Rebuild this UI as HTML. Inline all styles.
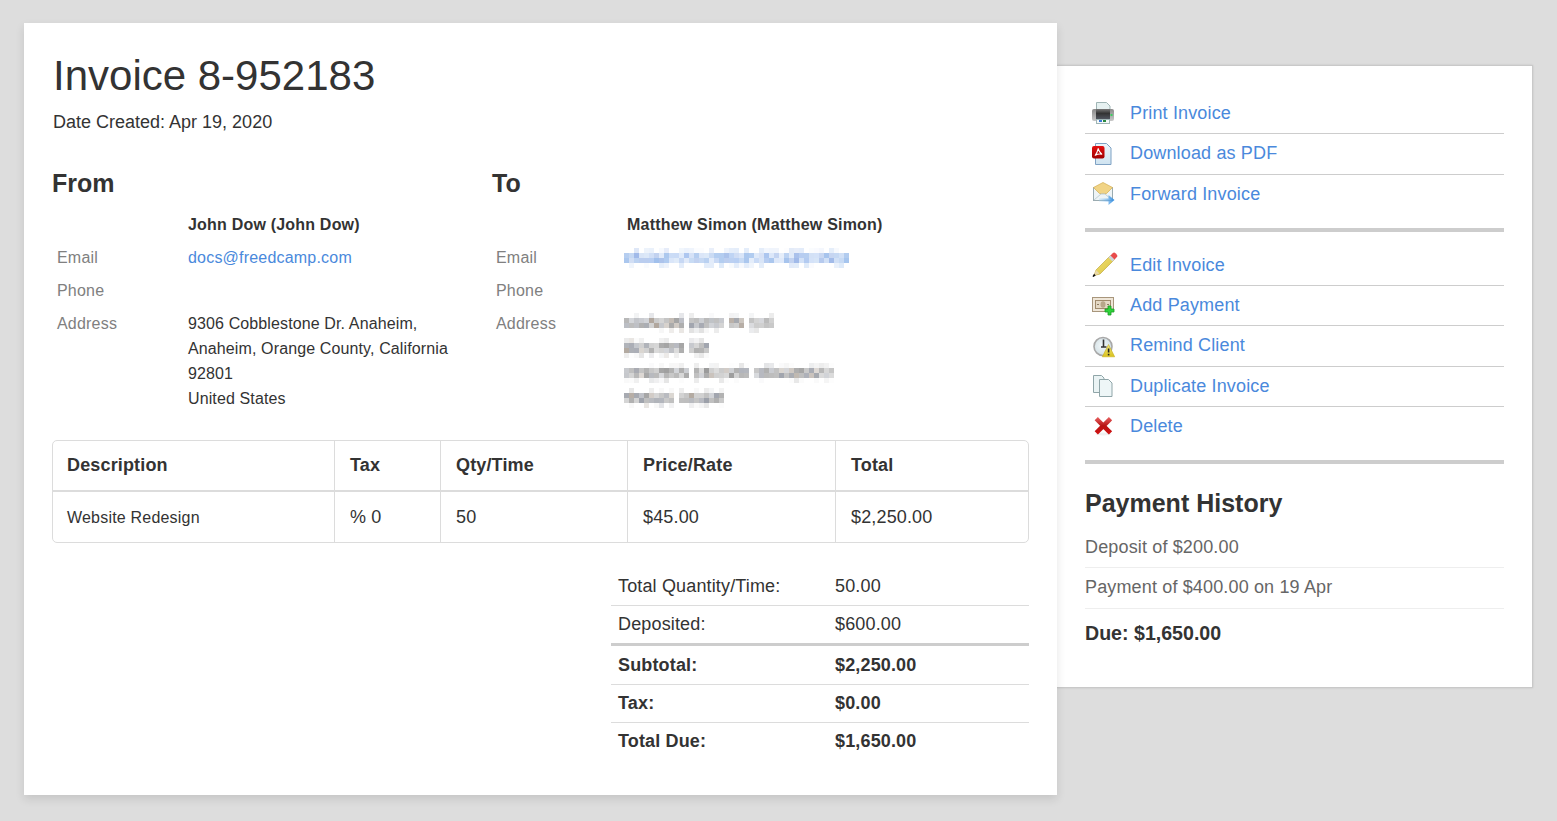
<!DOCTYPE html>
<html><head><meta charset="utf-8">
<style>
*{box-sizing:border-box;margin:0;padding:0}
html,body{width:1557px;height:821px;overflow:hidden;background:#dddddd;font-family:"Liberation Sans",sans-serif;color:#333}
.a{position:absolute;white-space:nowrap}
#side{position:absolute;left:1040px;top:65px;width:493px;height:623px;background:#fff;border:1px solid #c9c9c9;box-shadow:0 0 2px rgba(0,0,0,.12);z-index:1}
#main{position:absolute;left:24px;top:23px;width:1033px;height:772px;background:#fff;box-shadow:0 4px 9px rgba(0,0,0,.11);z-index:2}
#over{position:absolute;left:0;top:0;width:1557px;height:821px;z-index:3}
.b{font-weight:bold}
.s16{font-size:16px;line-height:20px;letter-spacing:.2px}
.s18{font-size:18px;line-height:22px;letter-spacing:.15px}
.lbl{color:#808080}
.lnk{color:#4a89dc}
.hl{position:absolute;height:1px;background:#ddd}
.sl{position:absolute;left:1085px;width:419px;height:1px;background:#cdcdcd}
.st{position:absolute;left:1085px;width:419px;height:4px;background:#cdcdcd}
.ic{position:absolute;left:1090px;width:26px;height:26px}
</style></head><body>
<div id="side"></div>
<div id="main"></div>
<div id="over">
  <div class="a" style="left:53px;top:55px;font-size:42px;line-height:42px">Invoice 8-952183</div>
  <div class="a s18" style="left:53px;top:111px;letter-spacing:0">Date Created: Apr 19, 2020</div>
  <div class="a b" style="left:52px;top:169px;font-size:25px;line-height:28px">From</div>
  <div class="a b" style="left:492px;top:169px;font-size:25px;line-height:28px">To</div>

  <div class="a b s16" style="left:188px;top:215px">John Dow (John Dow)</div>
  <div class="a b s16" style="left:627px;top:215px">Matthew Simon (Matthew Simon)</div>

  <div class="a s16 lbl" style="left:57px;top:248px">Email</div>
  <div class="a s16 lbl" style="left:57px;top:281px">Phone</div>
  <div class="a s16 lbl" style="left:57px;top:314px">Address</div>
  <div class="a s16 lbl" style="left:496px;top:248px">Email</div>
  <div class="a s16 lbl" style="left:496px;top:281px">Phone</div>
  <div class="a s16 lbl" style="left:496px;top:314px">Address</div>

  <div class="a s16 lnk" style="left:188px;top:248px">docs@freedcamp.com</div>
  <div class="a s16" style="left:188px;line-height:25px;top:311px;letter-spacing:.12px">9306 Cobblestone Dr. Anaheim,<br>Anaheim, Orange County, California<br>92801<br>United States</div>

  <!-- items table -->
  <div style="position:absolute;left:52px;top:440px;width:977px;height:103px;border:1px solid #dcdcdc;border-radius:5px"></div>
  <div style="position:absolute;left:53px;top:490px;width:975px;height:2px;background:#dcdcdc"></div>
  <div style="position:absolute;left:334px;top:441px;width:1px;height:101px;background:#dcdcdc"></div>
  <div style="position:absolute;left:440px;top:441px;width:1px;height:101px;background:#dcdcdc"></div>
  <div style="position:absolute;left:627px;top:441px;width:1px;height:101px;background:#dcdcdc"></div>
  <div style="position:absolute;left:835px;top:441px;width:1px;height:101px;background:#dcdcdc"></div>
  <div class="a b s18" style="left:67px;top:454px">Description</div>
  <div class="a b s18" style="left:350px;top:454px">Tax</div>
  <div class="a b s18" style="left:456px;top:454px">Qty/Time</div>
  <div class="a b s18" style="left:643px;top:454px">Price/Rate</div>
  <div class="a b s18" style="left:851px;top:454px">Total</div>
  <div class="a s16" style="left:67px;top:508px">Website Redesign</div>
  <div class="a s18" style="left:350px;top:506px">% 0</div>
  <div class="a s18" style="left:456px;top:506px">50</div>
  <div class="a s18" style="left:643px;top:506px">$45.00</div>
  <div class="a s18" style="left:851px;top:506px">$2,250.00</div>

  <!-- totals -->
  <div class="hl" style="left:611px;top:605px;width:418px;background:#dcdcdc"></div>
  <div style="position:absolute;left:611px;top:643px;width:418px;height:3px;background:#cdcdcd"></div>
  <div class="hl" style="left:611px;top:684px;width:418px;background:#dcdcdc"></div>
  <div class="hl" style="left:611px;top:722px;width:418px;background:#dcdcdc"></div>
  <div class="a s18" style="left:618px;top:575px">Total Quantity/Time:</div>
  <div class="a s18" style="left:835px;top:575px">50.00</div>
  <div class="a s18" style="left:618px;top:613px">Deposited:</div>
  <div class="a s18" style="left:835px;top:613px">$600.00</div>
  <div class="a s18 b" style="left:618px;top:654px">Subtotal:</div>
  <div class="a s18 b" style="left:835px;top:654px">$2,250.00</div>
  <div class="a s18 b" style="left:618px;top:692px">Tax:</div>
  <div class="a s18 b" style="left:835px;top:692px">$0.00</div>
  <div class="a s18 b" style="left:618px;top:730px">Total Due:</div>
  <div class="a s18 b" style="left:835px;top:730px">$1,650.00</div>

  <svg style="position:absolute;left:0;top:0" width="1557" height="821"><rect x="624" y="253" width="5" height="5" fill="#3f7fd8" fill-opacity="0.38"/><rect x="624" y="258" width="5" height="5" fill="#3f7fd8" fill-opacity="0.44"/><rect x="629" y="253" width="5" height="5" fill="#3f7fd8" fill-opacity="0.30"/><rect x="629" y="258" width="5" height="5" fill="#3a6fd0" fill-opacity="0.23"/><rect x="629" y="263" width="5" height="5" fill="#3f7fd8" fill-opacity="0.08"/><rect x="634" y="248" width="5" height="5" fill="#3a6fd0" fill-opacity="0.17"/><rect x="634" y="253" width="5" height="5" fill="#3a6fd0" fill-opacity="0.48"/><rect x="634" y="258" width="5" height="5" fill="#3f7fd8" fill-opacity="0.35"/><rect x="639" y="253" width="5" height="5" fill="#3f7fd8" fill-opacity="0.20"/><rect x="639" y="258" width="5" height="5" fill="#3a6fd0" fill-opacity="0.35"/><rect x="644" y="248" width="5" height="5" fill="#4a89dc" fill-opacity="0.10"/><rect x="644" y="253" width="5" height="5" fill="#3f7fd8" fill-opacity="0.18"/><rect x="644" y="258" width="5" height="5" fill="#3a6fd0" fill-opacity="0.35"/><rect x="644" y="263" width="5" height="5" fill="#6b9be6" fill-opacity="0.04"/><rect x="649" y="248" width="5" height="5" fill="#6b9be6" fill-opacity="0.14"/><rect x="649" y="253" width="5" height="5" fill="#5a8de0" fill-opacity="0.28"/><rect x="649" y="258" width="5" height="5" fill="#5a8de0" fill-opacity="0.43"/><rect x="654" y="253" width="5" height="5" fill="#3a6fd0" fill-opacity="0.31"/><rect x="654" y="258" width="5" height="5" fill="#3f7fd8" fill-opacity="0.49"/><rect x="659" y="248" width="5" height="5" fill="#6b9be6" fill-opacity="0.06"/><rect x="659" y="253" width="5" height="5" fill="#3f7fd8" fill-opacity="0.16"/><rect x="659" y="258" width="5" height="5" fill="#3a6fd0" fill-opacity="0.42"/><rect x="659" y="263" width="5" height="5" fill="#4a89dc" fill-opacity="0.14"/><rect x="664" y="248" width="5" height="5" fill="#3a6fd0" fill-opacity="0.13"/><rect x="664" y="253" width="5" height="5" fill="#3f7fd8" fill-opacity="0.43"/><rect x="664" y="258" width="5" height="5" fill="#4a89dc" fill-opacity="0.44"/><rect x="664" y="263" width="5" height="5" fill="#3f7fd8" fill-opacity="0.09"/><rect x="669" y="253" width="5" height="5" fill="#6b9be6" fill-opacity="0.35"/><rect x="669" y="258" width="5" height="5" fill="#6b9be6" fill-opacity="0.25"/><rect x="674" y="253" width="5" height="5" fill="#6b9be6" fill-opacity="0.36"/><rect x="674" y="258" width="5" height="5" fill="#4a89dc" fill-opacity="0.17"/><rect x="679" y="248" width="5" height="5" fill="#3f7fd8" fill-opacity="0.07"/><rect x="679" y="253" width="5" height="5" fill="#6b9be6" fill-opacity="0.21"/><rect x="679" y="258" width="5" height="5" fill="#5a8de0" fill-opacity="0.34"/><rect x="679" y="263" width="5" height="5" fill="#4a89dc" fill-opacity="0.15"/><rect x="684" y="248" width="5" height="5" fill="#6b9be6" fill-opacity="0.13"/><rect x="684" y="253" width="5" height="5" fill="#5a8de0" fill-opacity="0.49"/><rect x="684" y="258" width="5" height="5" fill="#5a8de0" fill-opacity="0.18"/><rect x="689" y="248" width="5" height="5" fill="#4a89dc" fill-opacity="0.09"/><rect x="689" y="253" width="5" height="5" fill="#5a8de0" fill-opacity="0.25"/><rect x="689" y="258" width="5" height="5" fill="#4a89dc" fill-opacity="0.30"/><rect x="694" y="248" width="5" height="5" fill="#3a6fd0" fill-opacity="0.02"/><rect x="694" y="253" width="5" height="5" fill="#3f7fd8" fill-opacity="0.38"/><rect x="694" y="258" width="5" height="5" fill="#3a6fd0" fill-opacity="0.31"/><rect x="699" y="248" width="5" height="5" fill="#3f7fd8" fill-opacity="0.02"/><rect x="699" y="253" width="5" height="5" fill="#5a8de0" fill-opacity="0.22"/><rect x="699" y="258" width="5" height="5" fill="#3f7fd8" fill-opacity="0.30"/><rect x="704" y="253" width="5" height="5" fill="#4a89dc" fill-opacity="0.19"/><rect x="704" y="258" width="5" height="5" fill="#3f7fd8" fill-opacity="0.36"/><rect x="704" y="263" width="5" height="5" fill="#5a8de0" fill-opacity="0.16"/><rect x="709" y="248" width="5" height="5" fill="#3a6fd0" fill-opacity="0.11"/><rect x="709" y="253" width="5" height="5" fill="#3f7fd8" fill-opacity="0.28"/><rect x="709" y="258" width="5" height="5" fill="#6b9be6" fill-opacity="0.19"/><rect x="709" y="263" width="5" height="5" fill="#6b9be6" fill-opacity="0.18"/><rect x="714" y="253" width="5" height="5" fill="#4a89dc" fill-opacity="0.41"/><rect x="714" y="258" width="5" height="5" fill="#5a8de0" fill-opacity="0.32"/><rect x="719" y="253" width="5" height="5" fill="#3f7fd8" fill-opacity="0.39"/><rect x="719" y="258" width="5" height="5" fill="#4a89dc" fill-opacity="0.42"/><rect x="719" y="263" width="5" height="5" fill="#4a89dc" fill-opacity="0.18"/><rect x="724" y="248" width="5" height="5" fill="#4a89dc" fill-opacity="0.09"/><rect x="724" y="253" width="5" height="5" fill="#3a6fd0" fill-opacity="0.42"/><rect x="724" y="258" width="5" height="5" fill="#3a6fd0" fill-opacity="0.34"/><rect x="729" y="248" width="5" height="5" fill="#5a8de0" fill-opacity="0.15"/><rect x="729" y="253" width="5" height="5" fill="#6b9be6" fill-opacity="0.43"/><rect x="729" y="258" width="5" height="5" fill="#5a8de0" fill-opacity="0.41"/><rect x="729" y="263" width="5" height="5" fill="#3f7fd8" fill-opacity="0.04"/><rect x="734" y="248" width="5" height="5" fill="#6b9be6" fill-opacity="0.18"/><rect x="734" y="253" width="5" height="5" fill="#3a6fd0" fill-opacity="0.24"/><rect x="734" y="258" width="5" height="5" fill="#6b9be6" fill-opacity="0.48"/><rect x="734" y="263" width="5" height="5" fill="#4a89dc" fill-opacity="0.15"/><rect x="739" y="253" width="5" height="5" fill="#5a8de0" fill-opacity="0.23"/><rect x="739" y="258" width="5" height="5" fill="#4a89dc" fill-opacity="0.31"/><rect x="739" y="263" width="5" height="5" fill="#3a6fd0" fill-opacity="0.04"/><rect x="744" y="248" width="5" height="5" fill="#4a89dc" fill-opacity="0.15"/><rect x="744" y="253" width="5" height="5" fill="#3f7fd8" fill-opacity="0.43"/><rect x="744" y="258" width="5" height="5" fill="#3f7fd8" fill-opacity="0.44"/><rect x="744" y="263" width="5" height="5" fill="#5a8de0" fill-opacity="0.16"/><rect x="749" y="253" width="5" height="5" fill="#4a89dc" fill-opacity="0.43"/><rect x="749" y="258" width="5" height="5" fill="#6b9be6" fill-opacity="0.18"/><rect x="749" y="263" width="5" height="5" fill="#3f7fd8" fill-opacity="0.08"/><rect x="754" y="253" width="5" height="5" fill="#5a8de0" fill-opacity="0.19"/><rect x="754" y="258" width="5" height="5" fill="#6b9be6" fill-opacity="0.36"/><rect x="759" y="248" width="5" height="5" fill="#4a89dc" fill-opacity="0.15"/><rect x="759" y="253" width="5" height="5" fill="#3a6fd0" fill-opacity="0.20"/><rect x="759" y="258" width="5" height="5" fill="#3f7fd8" fill-opacity="0.20"/><rect x="759" y="263" width="5" height="5" fill="#3f7fd8" fill-opacity="0.14"/><rect x="764" y="248" width="5" height="5" fill="#6b9be6" fill-opacity="0.09"/><rect x="764" y="253" width="5" height="5" fill="#5a8de0" fill-opacity="0.50"/><rect x="764" y="258" width="5" height="5" fill="#5a8de0" fill-opacity="0.44"/><rect x="769" y="248" width="5" height="5" fill="#4a89dc" fill-opacity="0.09"/><rect x="769" y="253" width="5" height="5" fill="#6b9be6" fill-opacity="0.24"/><rect x="769" y="258" width="5" height="5" fill="#3f7fd8" fill-opacity="0.44"/><rect x="774" y="248" width="5" height="5" fill="#3a6fd0" fill-opacity="0.08"/><rect x="774" y="253" width="5" height="5" fill="#3a6fd0" fill-opacity="0.30"/><rect x="774" y="258" width="5" height="5" fill="#5a8de0" fill-opacity="0.20"/><rect x="779" y="253" width="5" height="5" fill="#5a8de0" fill-opacity="0.15"/><rect x="779" y="258" width="5" height="5" fill="#6b9be6" fill-opacity="0.21"/><rect x="784" y="248" width="5" height="5" fill="#3a6fd0" fill-opacity="0.01"/><rect x="784" y="253" width="5" height="5" fill="#3f7fd8" fill-opacity="0.34"/><rect x="784" y="258" width="5" height="5" fill="#3f7fd8" fill-opacity="0.46"/><rect x="789" y="248" width="5" height="5" fill="#3a6fd0" fill-opacity="0.14"/><rect x="789" y="253" width="5" height="5" fill="#3f7fd8" fill-opacity="0.16"/><rect x="789" y="258" width="5" height="5" fill="#3a6fd0" fill-opacity="0.31"/><rect x="789" y="263" width="5" height="5" fill="#5a8de0" fill-opacity="0.18"/><rect x="794" y="248" width="5" height="5" fill="#3a6fd0" fill-opacity="0.12"/><rect x="794" y="253" width="5" height="5" fill="#3a6fd0" fill-opacity="0.43"/><rect x="794" y="258" width="5" height="5" fill="#3a6fd0" fill-opacity="0.48"/><rect x="794" y="263" width="5" height="5" fill="#4a89dc" fill-opacity="0.16"/><rect x="799" y="248" width="5" height="5" fill="#5a8de0" fill-opacity="0.17"/><rect x="799" y="253" width="5" height="5" fill="#5a8de0" fill-opacity="0.44"/><rect x="799" y="258" width="5" height="5" fill="#6b9be6" fill-opacity="0.30"/><rect x="804" y="253" width="5" height="5" fill="#3f7fd8" fill-opacity="0.38"/><rect x="804" y="258" width="5" height="5" fill="#5a8de0" fill-opacity="0.46"/><rect x="804" y="263" width="5" height="5" fill="#4a89dc" fill-opacity="0.17"/><rect x="809" y="248" width="5" height="5" fill="#6b9be6" fill-opacity="0.03"/><rect x="809" y="253" width="5" height="5" fill="#3f7fd8" fill-opacity="0.23"/><rect x="809" y="258" width="5" height="5" fill="#6b9be6" fill-opacity="0.29"/><rect x="809" y="263" width="5" height="5" fill="#5a8de0" fill-opacity="0.03"/><rect x="814" y="248" width="5" height="5" fill="#3a6fd0" fill-opacity="0.03"/><rect x="814" y="253" width="5" height="5" fill="#6b9be6" fill-opacity="0.29"/><rect x="814" y="258" width="5" height="5" fill="#4a89dc" fill-opacity="0.22"/><rect x="819" y="248" width="5" height="5" fill="#3f7fd8" fill-opacity="0.06"/><rect x="819" y="253" width="5" height="5" fill="#3a6fd0" fill-opacity="0.28"/><rect x="819" y="258" width="5" height="5" fill="#3a6fd0" fill-opacity="0.37"/><rect x="824" y="253" width="5" height="5" fill="#3f7fd8" fill-opacity="0.46"/><rect x="824" y="258" width="5" height="5" fill="#3f7fd8" fill-opacity="0.24"/><rect x="829" y="248" width="5" height="5" fill="#4a89dc" fill-opacity="0.14"/><rect x="829" y="253" width="5" height="5" fill="#3a6fd0" fill-opacity="0.29"/><rect x="829" y="258" width="5" height="5" fill="#3a6fd0" fill-opacity="0.47"/><rect x="834" y="248" width="5" height="5" fill="#5a8de0" fill-opacity="0.05"/><rect x="834" y="253" width="5" height="5" fill="#3f7fd8" fill-opacity="0.30"/><rect x="834" y="258" width="5" height="5" fill="#3f7fd8" fill-opacity="0.24"/><rect x="834" y="263" width="5" height="5" fill="#3f7fd8" fill-opacity="0.11"/><rect x="839" y="253" width="5" height="5" fill="#3f7fd8" fill-opacity="0.24"/><rect x="839" y="258" width="5" height="5" fill="#4a89dc" fill-opacity="0.31"/><rect x="839" y="263" width="5" height="5" fill="#4a89dc" fill-opacity="0.18"/><rect x="844" y="253" width="5" height="5" fill="#3f7fd8" fill-opacity="0.40"/><rect x="844" y="258" width="5" height="5" fill="#4a89dc" fill-opacity="0.49"/><rect x="624" y="318" width="5" height="5" fill="#777" fill-opacity="0.52"/><rect x="624" y="323" width="5" height="5" fill="#5a6070" fill-opacity="0.41"/><rect x="629" y="318" width="5" height="5" fill="#5a6070" fill-opacity="0.26"/><rect x="629" y="323" width="5" height="5" fill="#666" fill-opacity="0.43"/><rect x="634" y="313" width="5" height="5" fill="#5a6070" fill-opacity="0.08"/><rect x="634" y="318" width="5" height="5" fill="#6a6f7a" fill-opacity="0.40"/><rect x="634" y="323" width="5" height="5" fill="#6a6f7a" fill-opacity="0.44"/><rect x="639" y="318" width="5" height="5" fill="#5a6070" fill-opacity="0.32"/><rect x="639" y="323" width="5" height="5" fill="#666" fill-opacity="0.51"/><rect x="644" y="318" width="5" height="5" fill="#5a6070" fill-opacity="0.27"/><rect x="644" y="323" width="5" height="5" fill="#6a6f7a" fill-opacity="0.56"/><rect x="649" y="313" width="5" height="5" fill="#5a6070" fill-opacity="0.15"/><rect x="649" y="318" width="5" height="5" fill="#7a6a5a" fill-opacity="0.59"/><rect x="649" y="323" width="5" height="5" fill="#777" fill-opacity="0.33"/><rect x="654" y="318" width="5" height="5" fill="#777" fill-opacity="0.38"/><rect x="654" y="323" width="5" height="5" fill="#7a6a5a" fill-opacity="0.59"/><rect x="659" y="318" width="5" height="5" fill="#777" fill-opacity="0.31"/><rect x="659" y="323" width="5" height="5" fill="#6a6f7a" fill-opacity="0.38"/><rect x="659" y="328" width="5" height="5" fill="#666" fill-opacity="0.05"/><rect x="664" y="318" width="5" height="5" fill="#555" fill-opacity="0.34"/><rect x="664" y="323" width="5" height="5" fill="#7a6a5a" fill-opacity="0.30"/><rect x="669" y="318" width="5" height="5" fill="#7a6a5a" fill-opacity="0.45"/><rect x="669" y="323" width="5" height="5" fill="#666" fill-opacity="0.55"/><rect x="669" y="328" width="5" height="5" fill="#7a6a5a" fill-opacity="0.12"/><rect x="674" y="318" width="5" height="5" fill="#666" fill-opacity="0.59"/><rect x="674" y="323" width="5" height="5" fill="#7a6a5a" fill-opacity="0.35"/><rect x="679" y="313" width="5" height="5" fill="#5a6070" fill-opacity="0.15"/><rect x="679" y="318" width="5" height="5" fill="#5a6070" fill-opacity="0.40"/><rect x="679" y="323" width="5" height="5" fill="#666" fill-opacity="0.53"/><rect x="679" y="328" width="5" height="5" fill="#7a6a5a" fill-opacity="0.16"/><rect x="689" y="313" width="5" height="5" fill="#888" fill-opacity="0.15"/><rect x="689" y="318" width="5" height="5" fill="#888" fill-opacity="0.49"/><rect x="689" y="323" width="5" height="5" fill="#5a6070" fill-opacity="0.56"/><rect x="689" y="328" width="5" height="5" fill="#555" fill-opacity="0.17"/><rect x="694" y="318" width="5" height="5" fill="#555" fill-opacity="0.38"/><rect x="694" y="323" width="5" height="5" fill="#6a6f7a" fill-opacity="0.38"/><rect x="694" y="328" width="5" height="5" fill="#5a6070" fill-opacity="0.10"/><rect x="699" y="318" width="5" height="5" fill="#6a6f7a" fill-opacity="0.34"/><rect x="699" y="323" width="5" height="5" fill="#5a6070" fill-opacity="0.53"/><rect x="699" y="328" width="5" height="5" fill="#555" fill-opacity="0.17"/><rect x="704" y="318" width="5" height="5" fill="#777" fill-opacity="0.51"/><rect x="704" y="323" width="5" height="5" fill="#888" fill-opacity="0.53"/><rect x="704" y="328" width="5" height="5" fill="#666" fill-opacity="0.05"/><rect x="709" y="313" width="5" height="5" fill="#6a6f7a" fill-opacity="0.04"/><rect x="709" y="318" width="5" height="5" fill="#6a6f7a" fill-opacity="0.42"/><rect x="709" y="323" width="5" height="5" fill="#5a6070" fill-opacity="0.28"/><rect x="714" y="318" width="5" height="5" fill="#777" fill-opacity="0.46"/><rect x="714" y="323" width="5" height="5" fill="#5a6070" fill-opacity="0.34"/><rect x="714" y="328" width="5" height="5" fill="#666" fill-opacity="0.12"/><rect x="719" y="318" width="5" height="5" fill="#5a6070" fill-opacity="0.34"/><rect x="719" y="323" width="5" height="5" fill="#666" fill-opacity="0.28"/><rect x="729" y="313" width="5" height="5" fill="#6a6f7a" fill-opacity="0.09"/><rect x="729" y="318" width="5" height="5" fill="#7a6a5a" fill-opacity="0.52"/><rect x="729" y="323" width="5" height="5" fill="#555" fill-opacity="0.32"/><rect x="734" y="313" width="5" height="5" fill="#6a6f7a" fill-opacity="0.08"/><rect x="734" y="318" width="5" height="5" fill="#6a6f7a" fill-opacity="0.60"/><rect x="734" y="323" width="5" height="5" fill="#666" fill-opacity="0.32"/><rect x="739" y="318" width="5" height="5" fill="#7a6a5a" fill-opacity="0.38"/><rect x="739" y="323" width="5" height="5" fill="#7a6a5a" fill-opacity="0.54"/><rect x="749" y="313" width="5" height="5" fill="#6a6f7a" fill-opacity="0.07"/><rect x="749" y="318" width="5" height="5" fill="#666" fill-opacity="0.39"/><rect x="749" y="323" width="5" height="5" fill="#6a6f7a" fill-opacity="0.25"/><rect x="749" y="328" width="5" height="5" fill="#5a6070" fill-opacity="0.12"/><rect x="754" y="318" width="5" height="5" fill="#888" fill-opacity="0.36"/><rect x="754" y="323" width="5" height="5" fill="#777" fill-opacity="0.37"/><rect x="754" y="328" width="5" height="5" fill="#555" fill-opacity="0.14"/><rect x="759" y="318" width="5" height="5" fill="#5a6070" fill-opacity="0.25"/><rect x="759" y="323" width="5" height="5" fill="#777" fill-opacity="0.35"/><rect x="764" y="318" width="5" height="5" fill="#888" fill-opacity="0.57"/><rect x="764" y="323" width="5" height="5" fill="#555" fill-opacity="0.35"/><rect x="769" y="313" width="5" height="5" fill="#666" fill-opacity="0.12"/><rect x="769" y="318" width="5" height="5" fill="#777" fill-opacity="0.34"/><rect x="769" y="323" width="5" height="5" fill="#777" fill-opacity="0.40"/><rect x="624" y="338" width="5" height="5" fill="#888" fill-opacity="0.17"/><rect x="624" y="343" width="5" height="5" fill="#6a6f7a" fill-opacity="0.52"/><rect x="624" y="348" width="5" height="5" fill="#7a6a5a" fill-opacity="0.57"/><rect x="624" y="353" width="5" height="5" fill="#555" fill-opacity="0.10"/><rect x="629" y="338" width="5" height="5" fill="#7a6a5a" fill-opacity="0.17"/><rect x="629" y="343" width="5" height="5" fill="#5a6070" fill-opacity="0.51"/><rect x="629" y="348" width="5" height="5" fill="#6a6f7a" fill-opacity="0.55"/><rect x="629" y="353" width="5" height="5" fill="#666" fill-opacity="0.01"/><rect x="634" y="338" width="5" height="5" fill="#777" fill-opacity="0.03"/><rect x="634" y="343" width="5" height="5" fill="#5a6070" fill-opacity="0.35"/><rect x="634" y="348" width="5" height="5" fill="#5a6070" fill-opacity="0.51"/><rect x="634" y="353" width="5" height="5" fill="#777" fill-opacity="0.05"/><rect x="639" y="338" width="5" height="5" fill="#555" fill-opacity="0.09"/><rect x="639" y="343" width="5" height="5" fill="#666" fill-opacity="0.31"/><rect x="639" y="348" width="5" height="5" fill="#7a6a5a" fill-opacity="0.28"/><rect x="639" y="353" width="5" height="5" fill="#666" fill-opacity="0.16"/><rect x="644" y="343" width="5" height="5" fill="#6a6f7a" fill-opacity="0.52"/><rect x="644" y="348" width="5" height="5" fill="#666" fill-opacity="0.30"/><rect x="649" y="343" width="5" height="5" fill="#888" fill-opacity="0.38"/><rect x="649" y="348" width="5" height="5" fill="#555" fill-opacity="0.45"/><rect x="649" y="353" width="5" height="5" fill="#6a6f7a" fill-opacity="0.13"/><rect x="654" y="343" width="5" height="5" fill="#888" fill-opacity="0.34"/><rect x="654" y="348" width="5" height="5" fill="#777" fill-opacity="0.27"/><rect x="659" y="338" width="5" height="5" fill="#888" fill-opacity="0.12"/><rect x="659" y="343" width="5" height="5" fill="#666" fill-opacity="0.55"/><rect x="659" y="348" width="5" height="5" fill="#666" fill-opacity="0.28"/><rect x="659" y="353" width="5" height="5" fill="#6a6f7a" fill-opacity="0.07"/><rect x="664" y="338" width="5" height="5" fill="#888" fill-opacity="0.17"/><rect x="664" y="343" width="5" height="5" fill="#666" fill-opacity="0.59"/><rect x="664" y="348" width="5" height="5" fill="#5a6070" fill-opacity="0.26"/><rect x="664" y="353" width="5" height="5" fill="#7a6a5a" fill-opacity="0.14"/><rect x="669" y="343" width="5" height="5" fill="#888" fill-opacity="0.58"/><rect x="669" y="348" width="5" height="5" fill="#6a6f7a" fill-opacity="0.43"/><rect x="674" y="343" width="5" height="5" fill="#5a6070" fill-opacity="0.43"/><rect x="674" y="348" width="5" height="5" fill="#888" fill-opacity="0.29"/><rect x="674" y="353" width="5" height="5" fill="#888" fill-opacity="0.13"/><rect x="679" y="343" width="5" height="5" fill="#555" fill-opacity="0.52"/><rect x="679" y="348" width="5" height="5" fill="#666" fill-opacity="0.52"/><rect x="689" y="338" width="5" height="5" fill="#5a6070" fill-opacity="0.13"/><rect x="689" y="343" width="5" height="5" fill="#5a6070" fill-opacity="0.34"/><rect x="689" y="348" width="5" height="5" fill="#888" fill-opacity="0.40"/><rect x="694" y="338" width="5" height="5" fill="#6a6f7a" fill-opacity="0.09"/><rect x="694" y="343" width="5" height="5" fill="#888" fill-opacity="0.34"/><rect x="694" y="348" width="5" height="5" fill="#555" fill-opacity="0.46"/><rect x="694" y="353" width="5" height="5" fill="#777" fill-opacity="0.10"/><rect x="699" y="338" width="5" height="5" fill="#666" fill-opacity="0.17"/><rect x="699" y="343" width="5" height="5" fill="#666" fill-opacity="0.42"/><rect x="699" y="348" width="5" height="5" fill="#555" fill-opacity="0.44"/><rect x="699" y="353" width="5" height="5" fill="#777" fill-opacity="0.17"/><rect x="704" y="343" width="5" height="5" fill="#5a6070" fill-opacity="0.56"/><rect x="704" y="348" width="5" height="5" fill="#777" fill-opacity="0.40"/><rect x="704" y="353" width="5" height="5" fill="#777" fill-opacity="0.04"/><rect x="624" y="368" width="5" height="5" fill="#6a6f7a" fill-opacity="0.37"/><rect x="624" y="373" width="5" height="5" fill="#6a6f7a" fill-opacity="0.38"/><rect x="624" y="378" width="5" height="5" fill="#5a6070" fill-opacity="0.04"/><rect x="629" y="368" width="5" height="5" fill="#666" fill-opacity="0.42"/><rect x="629" y="373" width="5" height="5" fill="#888" fill-opacity="0.36"/><rect x="629" y="378" width="5" height="5" fill="#777" fill-opacity="0.03"/><rect x="634" y="368" width="5" height="5" fill="#6a6f7a" fill-opacity="0.58"/><rect x="634" y="373" width="5" height="5" fill="#666" fill-opacity="0.46"/><rect x="634" y="378" width="5" height="5" fill="#555" fill-opacity="0.09"/><rect x="639" y="368" width="5" height="5" fill="#666" fill-opacity="0.39"/><rect x="639" y="373" width="5" height="5" fill="#7a6a5a" fill-opacity="0.26"/><rect x="644" y="368" width="5" height="5" fill="#777" fill-opacity="0.56"/><rect x="644" y="373" width="5" height="5" fill="#555" fill-opacity="0.51"/><rect x="649" y="363" width="5" height="5" fill="#5a6070" fill-opacity="0.03"/><rect x="649" y="368" width="5" height="5" fill="#777" fill-opacity="0.41"/><rect x="649" y="373" width="5" height="5" fill="#6a6f7a" fill-opacity="0.48"/><rect x="649" y="378" width="5" height="5" fill="#6a6f7a" fill-opacity="0.15"/><rect x="654" y="368" width="5" height="5" fill="#777" fill-opacity="0.35"/><rect x="654" y="373" width="5" height="5" fill="#555" fill-opacity="0.40"/><rect x="654" y="378" width="5" height="5" fill="#6a6f7a" fill-opacity="0.10"/><rect x="659" y="363" width="5" height="5" fill="#888" fill-opacity="0.06"/><rect x="659" y="368" width="5" height="5" fill="#555" fill-opacity="0.53"/><rect x="659" y="373" width="5" height="5" fill="#6a6f7a" fill-opacity="0.27"/><rect x="659" y="378" width="5" height="5" fill="#6a6f7a" fill-opacity="0.04"/><rect x="664" y="368" width="5" height="5" fill="#555" fill-opacity="0.56"/><rect x="664" y="373" width="5" height="5" fill="#666" fill-opacity="0.47"/><rect x="664" y="378" width="5" height="5" fill="#555" fill-opacity="0.15"/><rect x="669" y="363" width="5" height="5" fill="#888" fill-opacity="0.07"/><rect x="669" y="368" width="5" height="5" fill="#777" fill-opacity="0.57"/><rect x="669" y="373" width="5" height="5" fill="#555" fill-opacity="0.32"/><rect x="674" y="363" width="5" height="5" fill="#7a6a5a" fill-opacity="0.05"/><rect x="674" y="368" width="5" height="5" fill="#5a6070" fill-opacity="0.27"/><rect x="674" y="373" width="5" height="5" fill="#777" fill-opacity="0.50"/><rect x="679" y="363" width="5" height="5" fill="#888" fill-opacity="0.13"/><rect x="679" y="368" width="5" height="5" fill="#555" fill-opacity="0.47"/><rect x="679" y="373" width="5" height="5" fill="#666" fill-opacity="0.26"/><rect x="679" y="378" width="5" height="5" fill="#6a6f7a" fill-opacity="0.02"/><rect x="684" y="368" width="5" height="5" fill="#6a6f7a" fill-opacity="0.34"/><rect x="684" y="373" width="5" height="5" fill="#666" fill-opacity="0.54"/><rect x="694" y="363" width="5" height="5" fill="#888" fill-opacity="0.14"/><rect x="694" y="368" width="5" height="5" fill="#666" fill-opacity="0.49"/><rect x="694" y="373" width="5" height="5" fill="#777" fill-opacity="0.46"/><rect x="694" y="378" width="5" height="5" fill="#888" fill-opacity="0.16"/><rect x="699" y="368" width="5" height="5" fill="#888" fill-opacity="0.32"/><rect x="699" y="373" width="5" height="5" fill="#6a6f7a" fill-opacity="0.31"/><rect x="704" y="368" width="5" height="5" fill="#555" fill-opacity="0.59"/><rect x="704" y="373" width="5" height="5" fill="#777" fill-opacity="0.60"/><rect x="709" y="363" width="5" height="5" fill="#6a6f7a" fill-opacity="0.08"/><rect x="709" y="368" width="5" height="5" fill="#666" fill-opacity="0.31"/><rect x="709" y="373" width="5" height="5" fill="#7a6a5a" fill-opacity="0.40"/><rect x="714" y="363" width="5" height="5" fill="#888" fill-opacity="0.10"/><rect x="714" y="368" width="5" height="5" fill="#888" fill-opacity="0.29"/><rect x="714" y="373" width="5" height="5" fill="#777" fill-opacity="0.35"/><rect x="719" y="368" width="5" height="5" fill="#666" fill-opacity="0.34"/><rect x="719" y="373" width="5" height="5" fill="#777" fill-opacity="0.33"/><rect x="719" y="378" width="5" height="5" fill="#777" fill-opacity="0.16"/><rect x="724" y="368" width="5" height="5" fill="#7a6a5a" fill-opacity="0.34"/><rect x="724" y="373" width="5" height="5" fill="#888" fill-opacity="0.33"/><rect x="724" y="378" width="5" height="5" fill="#555" fill-opacity="0.02"/><rect x="729" y="363" width="5" height="5" fill="#888" fill-opacity="0.02"/><rect x="729" y="368" width="5" height="5" fill="#6a6f7a" fill-opacity="0.33"/><rect x="729" y="373" width="5" height="5" fill="#555" fill-opacity="0.57"/><rect x="734" y="363" width="5" height="5" fill="#888" fill-opacity="0.01"/><rect x="734" y="368" width="5" height="5" fill="#555" fill-opacity="0.45"/><rect x="734" y="373" width="5" height="5" fill="#888" fill-opacity="0.38"/><rect x="734" y="378" width="5" height="5" fill="#888" fill-opacity="0.03"/><rect x="739" y="363" width="5" height="5" fill="#555" fill-opacity="0.14"/><rect x="739" y="368" width="5" height="5" fill="#5a6070" fill-opacity="0.47"/><rect x="739" y="373" width="5" height="5" fill="#666" fill-opacity="0.47"/><rect x="744" y="363" width="5" height="5" fill="#555" fill-opacity="0.01"/><rect x="744" y="368" width="5" height="5" fill="#5a6070" fill-opacity="0.46"/><rect x="744" y="373" width="5" height="5" fill="#888" fill-opacity="0.57"/><rect x="754" y="368" width="5" height="5" fill="#666" fill-opacity="0.36"/><rect x="754" y="373" width="5" height="5" fill="#6a6f7a" fill-opacity="0.26"/><rect x="759" y="368" width="5" height="5" fill="#5a6070" fill-opacity="0.44"/><rect x="759" y="373" width="5" height="5" fill="#5a6070" fill-opacity="0.44"/><rect x="759" y="378" width="5" height="5" fill="#6a6f7a" fill-opacity="0.03"/><rect x="764" y="363" width="5" height="5" fill="#6a6f7a" fill-opacity="0.18"/><rect x="764" y="368" width="5" height="5" fill="#777" fill-opacity="0.58"/><rect x="764" y="373" width="5" height="5" fill="#777" fill-opacity="0.51"/><rect x="769" y="363" width="5" height="5" fill="#5a6070" fill-opacity="0.14"/><rect x="769" y="368" width="5" height="5" fill="#5a6070" fill-opacity="0.32"/><rect x="769" y="373" width="5" height="5" fill="#555" fill-opacity="0.39"/><rect x="774" y="368" width="5" height="5" fill="#777" fill-opacity="0.45"/><rect x="774" y="373" width="5" height="5" fill="#666" fill-opacity="0.41"/><rect x="779" y="363" width="5" height="5" fill="#6a6f7a" fill-opacity="0.03"/><rect x="779" y="368" width="5" height="5" fill="#7a6a5a" fill-opacity="0.28"/><rect x="779" y="373" width="5" height="5" fill="#5a6070" fill-opacity="0.57"/><rect x="784" y="363" width="5" height="5" fill="#555" fill-opacity="0.05"/><rect x="784" y="368" width="5" height="5" fill="#6a6f7a" fill-opacity="0.29"/><rect x="784" y="373" width="5" height="5" fill="#888" fill-opacity="0.51"/><rect x="789" y="363" width="5" height="5" fill="#6a6f7a" fill-opacity="0.02"/><rect x="789" y="368" width="5" height="5" fill="#7a6a5a" fill-opacity="0.36"/><rect x="789" y="373" width="5" height="5" fill="#6a6f7a" fill-opacity="0.57"/><rect x="789" y="378" width="5" height="5" fill="#5a6070" fill-opacity="0.02"/><rect x="794" y="368" width="5" height="5" fill="#666" fill-opacity="0.53"/><rect x="794" y="373" width="5" height="5" fill="#7a6a5a" fill-opacity="0.47"/><rect x="794" y="378" width="5" height="5" fill="#666" fill-opacity="0.15"/><rect x="799" y="368" width="5" height="5" fill="#666" fill-opacity="0.58"/><rect x="799" y="373" width="5" height="5" fill="#555" fill-opacity="0.38"/><rect x="799" y="378" width="5" height="5" fill="#888" fill-opacity="0.03"/><rect x="804" y="368" width="5" height="5" fill="#888" fill-opacity="0.45"/><rect x="804" y="373" width="5" height="5" fill="#5a6070" fill-opacity="0.49"/><rect x="809" y="363" width="5" height="5" fill="#5a6070" fill-opacity="0.11"/><rect x="809" y="368" width="5" height="5" fill="#5a6070" fill-opacity="0.52"/><rect x="809" y="373" width="5" height="5" fill="#7a6a5a" fill-opacity="0.40"/><rect x="814" y="363" width="5" height="5" fill="#666" fill-opacity="0.07"/><rect x="814" y="368" width="5" height="5" fill="#7a6a5a" fill-opacity="0.26"/><rect x="814" y="373" width="5" height="5" fill="#6a6f7a" fill-opacity="0.60"/><rect x="814" y="378" width="5" height="5" fill="#888" fill-opacity="0.04"/><rect x="819" y="363" width="5" height="5" fill="#888" fill-opacity="0.15"/><rect x="819" y="368" width="5" height="5" fill="#555" fill-opacity="0.42"/><rect x="819" y="373" width="5" height="5" fill="#777" fill-opacity="0.27"/><rect x="824" y="363" width="5" height="5" fill="#555" fill-opacity="0.08"/><rect x="824" y="368" width="5" height="5" fill="#666" fill-opacity="0.26"/><rect x="824" y="373" width="5" height="5" fill="#5a6070" fill-opacity="0.28"/><rect x="824" y="378" width="5" height="5" fill="#555" fill-opacity="0.06"/><rect x="829" y="363" width="5" height="5" fill="#6a6f7a" fill-opacity="0.01"/><rect x="829" y="368" width="5" height="5" fill="#888" fill-opacity="0.48"/><rect x="829" y="373" width="5" height="5" fill="#888" fill-opacity="0.30"/><rect x="829" y="378" width="5" height="5" fill="#5a6070" fill-opacity="0.01"/><rect x="624" y="393" width="5" height="5" fill="#6a6f7a" fill-opacity="0.59"/><rect x="624" y="398" width="5" height="5" fill="#888" fill-opacity="0.35"/><rect x="629" y="388" width="5" height="5" fill="#555" fill-opacity="0.14"/><rect x="629" y="393" width="5" height="5" fill="#7a6a5a" fill-opacity="0.54"/><rect x="629" y="398" width="5" height="5" fill="#666" fill-opacity="0.51"/><rect x="629" y="403" width="5" height="5" fill="#888" fill-opacity="0.06"/><rect x="634" y="393" width="5" height="5" fill="#6a6f7a" fill-opacity="0.59"/><rect x="634" y="398" width="5" height="5" fill="#777" fill-opacity="0.32"/><rect x="639" y="393" width="5" height="5" fill="#5a6070" fill-opacity="0.39"/><rect x="639" y="398" width="5" height="5" fill="#5a6070" fill-opacity="0.58"/><rect x="644" y="393" width="5" height="5" fill="#555" fill-opacity="0.52"/><rect x="644" y="398" width="5" height="5" fill="#777" fill-opacity="0.47"/><rect x="644" y="403" width="5" height="5" fill="#7a6a5a" fill-opacity="0.17"/><rect x="649" y="388" width="5" height="5" fill="#555" fill-opacity="0.10"/><rect x="649" y="393" width="5" height="5" fill="#7a6a5a" fill-opacity="0.34"/><rect x="649" y="398" width="5" height="5" fill="#6a6f7a" fill-opacity="0.47"/><rect x="654" y="393" width="5" height="5" fill="#777" fill-opacity="0.30"/><rect x="654" y="398" width="5" height="5" fill="#6a6f7a" fill-opacity="0.52"/><rect x="654" y="403" width="5" height="5" fill="#555" fill-opacity="0.04"/><rect x="659" y="388" width="5" height="5" fill="#777" fill-opacity="0.05"/><rect x="659" y="393" width="5" height="5" fill="#888" fill-opacity="0.47"/><rect x="659" y="398" width="5" height="5" fill="#5a6070" fill-opacity="0.46"/><rect x="659" y="403" width="5" height="5" fill="#5a6070" fill-opacity="0.16"/><rect x="664" y="393" width="5" height="5" fill="#6a6f7a" fill-opacity="0.47"/><rect x="664" y="398" width="5" height="5" fill="#777" fill-opacity="0.40"/><rect x="669" y="388" width="5" height="5" fill="#555" fill-opacity="0.04"/><rect x="669" y="393" width="5" height="5" fill="#7a6a5a" fill-opacity="0.27"/><rect x="669" y="398" width="5" height="5" fill="#555" fill-opacity="0.37"/><rect x="669" y="403" width="5" height="5" fill="#6a6f7a" fill-opacity="0.09"/><rect x="679" y="388" width="5" height="5" fill="#666" fill-opacity="0.11"/><rect x="679" y="393" width="5" height="5" fill="#888" fill-opacity="0.38"/><rect x="679" y="398" width="5" height="5" fill="#666" fill-opacity="0.42"/><rect x="679" y="403" width="5" height="5" fill="#5a6070" fill-opacity="0.00"/><rect x="684" y="393" width="5" height="5" fill="#888" fill-opacity="0.47"/><rect x="684" y="398" width="5" height="5" fill="#777" fill-opacity="0.48"/><rect x="689" y="388" width="5" height="5" fill="#7a6a5a" fill-opacity="0.00"/><rect x="689" y="393" width="5" height="5" fill="#7a6a5a" fill-opacity="0.56"/><rect x="689" y="398" width="5" height="5" fill="#6a6f7a" fill-opacity="0.48"/><rect x="689" y="403" width="5" height="5" fill="#6a6f7a" fill-opacity="0.11"/><rect x="694" y="388" width="5" height="5" fill="#555" fill-opacity="0.04"/><rect x="694" y="393" width="5" height="5" fill="#555" fill-opacity="0.27"/><rect x="694" y="398" width="5" height="5" fill="#666" fill-opacity="0.39"/><rect x="694" y="403" width="5" height="5" fill="#555" fill-opacity="0.03"/><rect x="699" y="388" width="5" height="5" fill="#666" fill-opacity="0.00"/><rect x="699" y="393" width="5" height="5" fill="#666" fill-opacity="0.30"/><rect x="699" y="398" width="5" height="5" fill="#5a6070" fill-opacity="0.43"/><rect x="699" y="403" width="5" height="5" fill="#888" fill-opacity="0.09"/><rect x="704" y="388" width="5" height="5" fill="#555" fill-opacity="0.11"/><rect x="704" y="393" width="5" height="5" fill="#555" fill-opacity="0.36"/><rect x="704" y="398" width="5" height="5" fill="#5a6070" fill-opacity="0.60"/><rect x="704" y="403" width="5" height="5" fill="#555" fill-opacity="0.14"/><rect x="709" y="388" width="5" height="5" fill="#6a6f7a" fill-opacity="0.07"/><rect x="709" y="393" width="5" height="5" fill="#5a6070" fill-opacity="0.28"/><rect x="709" y="398" width="5" height="5" fill="#666" fill-opacity="0.41"/><rect x="714" y="393" width="5" height="5" fill="#5a6070" fill-opacity="0.56"/><rect x="714" y="398" width="5" height="5" fill="#777" fill-opacity="0.58"/><rect x="719" y="388" width="5" height="5" fill="#888" fill-opacity="0.10"/><rect x="719" y="393" width="5" height="5" fill="#777" fill-opacity="0.57"/><rect x="719" y="398" width="5" height="5" fill="#666" fill-opacity="0.35"/><rect x="719" y="403" width="5" height="5" fill="#666" fill-opacity="0.02"/></svg>

  <!-- side panel -->
  <div class="sl" style="top:133px"></div>
  <div class="sl" style="top:174px"></div>
  <div class="st" style="top:228px"></div>
  <div class="sl" style="top:285px"></div>
  <div class="sl" style="top:325px"></div>
  <div class="sl" style="top:366px"></div>
  <div class="sl" style="top:406px"></div>
  <div class="st" style="top:460px"></div>
  <div class="a s18 lnk" style="left:1130px;top:102px">Print Invoice</div>
  <div class="a s18 lnk" style="left:1130px;top:142px">Download as PDF</div>
  <div class="a s18 lnk" style="left:1130px;top:183px">Forward Invoice</div>
  <div class="a s18 lnk" style="left:1130px;top:254px">Edit Invoice</div>
  <div class="a s18 lnk" style="left:1130px;top:294px">Add Payment</div>
  <div class="a s18 lnk" style="left:1130px;top:334px">Remind Client</div>
  <div class="a s18 lnk" style="left:1130px;top:375px">Duplicate Invoice</div>
  <div class="a s18 lnk" style="left:1130px;top:415px">Delete</div>

  <div class="a b" style="left:1085px;top:489px;font-size:25px;line-height:28px">Payment History</div>
  <div class="a s18" style="left:1085px;top:536px;color:#666">Deposit of $200.00</div>
  <div class="hl" style="left:1085px;top:567px;width:419px;background:#eee"></div>
  <div class="a s18" style="left:1085px;top:576px;color:#666">Payment of $400.00 on 19 Apr</div>
  <div class="hl" style="left:1085px;top:608px;width:419px;background:#eee"></div>
  <div class="a b" style="left:1085px;top:622px;font-size:19.6px;line-height:22px">Due: $1,650.00</div>

  <svg style="position:absolute;left:0;top:0" width="1557" height="821">
<defs>
<linearGradient id="gBody" x1="0" y1="0" x2="0" y2="1"><stop offset="0" stop-color="#8a8a8a"/><stop offset="1" stop-color="#c8c8c8"/></linearGradient>
<linearGradient id="gDark" x1="0" y1="0" x2="0" y2="1"><stop offset="0" stop-color="#777"/><stop offset=".4" stop-color="#333"/><stop offset="1" stop-color="#555a66"/></linearGradient>
<linearGradient id="gRed" x1="0" y1="0" x2="0" y2="1"><stop offset="0" stop-color="#e41010"/><stop offset="1" stop-color="#a00000"/></linearGradient>
<linearGradient id="gPage" x1="0" y1="0" x2="0" y2="1"><stop offset="0" stop-color="#eef6fb"/><stop offset="1" stop-color="#cfe3f0"/></linearGradient>
<linearGradient id="gArrow" x1="0" y1="0" x2="1" y2="0"><stop offset="0" stop-color="#9fd0f5" stop-opacity=".3"/><stop offset="1" stop-color="#2f8be0"/></linearGradient>
<linearGradient id="gPen" x1="0" y1="0" x2="1" y2="1"><stop offset="0" stop-color="#f3e27a"/><stop offset="1" stop-color="#d8c23a"/></linearGradient>
<radialGradient id="gClock" cx=".45" cy=".45" r=".6"><stop offset="0" stop-color="#f2f8fa"/><stop offset="1" stop-color="#cfdde2"/></radialGradient>
<linearGradient id="gWarn" x1="0" y1="0" x2="0" y2="1"><stop offset="0" stop-color="#f2e680"/><stop offset="1" stop-color="#d9c21a"/></linearGradient>
<linearGradient id="gX" gradientUnits="userSpaceOnUse" x1="0" y1="418" x2="0" y2="435"><stop offset="0" stop-color="#e45a5a"/><stop offset=".45" stop-color="#b81414"/><stop offset="1" stop-color="#d41010"/></linearGradient>
</defs>
<!-- printer -->
<path d="M1096.5 102.5h10l3.5 3.5v5h-13.5z" fill="#e6f1f1" stroke="#9fb5b5"/>
<rect x="1092" y="109" width="22" height="12" rx="2" fill="url(#gBody)"/>
<rect x="1096" y="109" width="14" height="11" fill="url(#gDark)"/>
<rect x="1110.5" y="114" width="2" height="2" fill="#3ad060"/>
<rect x="1096.5" y="119.5" width="13" height="4" fill="#f4f8f8" stroke="#9fb5b5"/>
<rect x="1099" y="120" width="3" height="2" fill="#3d7ad8"/><rect x="1103" y="120" width="3" height="2" fill="#2a8a40"/>
<!-- pdf -->
<path d="M1095.5 143.5h11l4.5 4.5v16.5h-15.5z" fill="url(#gPage)" stroke="#7fa2c4"/>
<rect x="1092" y="146" width="12.5" height="12.5" rx="2" fill="url(#gRed)"/>
<path d="M1098.2 148.6c-.6 2.6-1.6 5-3 6.7c2.2-1.2 4.6-1.6 6.6-1.1c-1.6-1.3-3-3.4-3.6-5.6z" stroke="#fff" stroke-width="1.1" fill="none" stroke-linejoin="round"/>
<!-- envelope -->
<rect x="1093.5" y="187.5" width="19" height="13" fill="#eef4f6" stroke="#9aabb0"/>
<path d="M1093.5 187.5l9.5-5 9.5 5-6 6h-7z" fill="#f1d486" stroke="#d7b45c" stroke-width=".8"/>
<path d="M1094 200l7-6h4l7 6" fill="none" stroke="#c0d0d6" stroke-width="1"/>
<path d="M1099 198.5h9.5v-3.5l6 5-6 5v-3.5h-9.5z" fill="url(#gArrow)"/>
<!-- pencil -->
<path d="M1094 275.5l2-5.5 14.5-14.5 4 4-14.5 14.5z" fill="url(#gPen)" stroke="#b8a030" stroke-width=".6"/>
<path d="M1094 275.5l2-5.5 3.5 3.5z" fill="#e8d7a8"/>
<path d="M1093 276.5l1.8-1.2-0.6-0.6z" fill="#111" stroke="#111" stroke-width="1.2"/>
<path d="M1108.5 257.5l3-3 4 4-3 3z" fill="#cfd4d8"/>
<path d="M1110.5 255.5l2.2-2.2a2 2 0 0 1 2.8 0l1.2 1.2a2 2 0 0 1 0 2.8l-2.2 2.2z" fill="#e84b4b"/>
<!-- money -->
<rect x="1092.5" y="297.5" width="21" height="14" fill="#efe6d8" stroke="#a8967c"/>
<rect x="1095.5" y="300.5" width="15" height="8" fill="#e4d8c4" stroke="#a08a6c"/>
<ellipse cx="1103" cy="304.5" rx="2.5" ry="3.2" fill="#b8a68a"/>
<path d="M1097 304.5h2M1107 304.5h2" stroke="#8d7a60"/>
<path d="M1108 306h3v3h3v3h-3v3h-3v-3h-3v-3h3z" fill="#2ed23a" stroke="#1a9a22" stroke-width=".8"/>
<!-- clock -->
<circle cx="1103" cy="346.5" r="9" fill="url(#gClock)" stroke="#a8a8a8" stroke-width="1.6"/>
<path d="M1103.5 339.5v8M1101 347h5.5" stroke="#333" stroke-width="1.6"/>
<path d="M1108.5 344.5l6.2 12.3h-12.4z" fill="url(#gWarn)" stroke="#c8b020" stroke-width=".6"/>
<rect x="1107.8" y="348.5" width="1.6" height="4" fill="#222"/><rect x="1107.8" y="353.8" width="1.6" height="1.6" fill="#222"/>
<!-- duplicate -->
<path d="M1093.5 375.5h8l2.5 2.5v14.5h-10.5z" fill="#eaf3f4" stroke="#8fa5a8"/>
<path d="M1099.5 379.5h9l3.5 3.5v13.5h-12.5z" fill="#eef6f7" stroke="#8fa5a8"/>
<!-- delete X -->
<ellipse cx="1103.5" cy="434" rx="8" ry="1.5" fill="#000" fill-opacity=".06"/>
<path d="M1097.9 420.35l11 11M1108.9 420.35l-11 11" stroke="url(#gX)" stroke-width="4.6" stroke-linecap="square"/>
</svg>

</div>
</body></html>
